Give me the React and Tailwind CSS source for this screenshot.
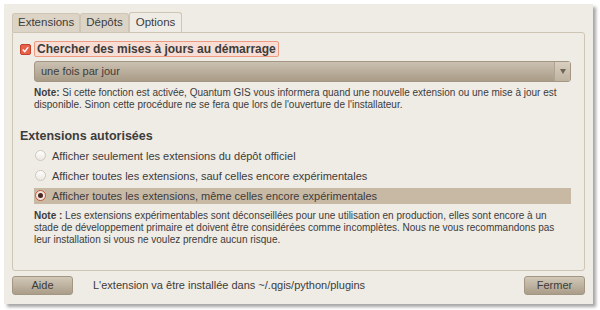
import { useState } from "react";

const font = { fontFamily: '"Liberation Sans", Arial, sans-serif' };

function Radio({ checked }) {
  return (
    <span className={"flex h-[11px] w-[11px] shrink-0 items-center justify-center rounded-full border " + (checked ? "border-[#c7573a] bg-[#f3e6e1]" : "border-[#cfc8bd] bg-gradient-to-b from-white to-[#ece8e2]")}>
      {checked && <span className="h-[5px] w-[5px] rounded-full bg-[#4a2a20]" />}
    </span>
  );
}

export default function App() {
  const [choice, setChoice] = useState(2);
  const options = [
    "Afficher seulement les extensions du dépôt officiel",
    "Afficher toutes les extensions, sauf celles encore expérimentales",
    "Afficher toutes les extensions, même celles encore expérimentales",
  ];

  return (
    <div className="h-[310px] w-[600px] bg-white pl-[4px] pt-[4px] text-[#3c3c3c]" style={font}>
      <div className="flex h-[300px] w-[589px] flex-col bg-[#efebe5] px-[8px] pt-[8px] shadow-[3px_3px_3px_rgba(0,0,0,0.35)]">
        <div className="flex items-end text-[11.5px]">
          <div className="flex h-[19px] items-center rounded-t-[3px] border border-b-0 border-[#cfc5b4] bg-[#dcd4c6] px-[5px]">Extensions</div>
          <div className="flex h-[19px] items-center rounded-t-[3px] border border-b-0 border-[#cfc5b4] bg-[#dcd4c6] px-[5px]">Dépôts</div>
          <div className="-mb-px flex h-[21px] items-center rounded-t-[3px] border border-b-0 border-[#cfc5b4] bg-[#efebe5] px-[6px]">Options</div>
        </div>
        <div className="flex h-[239px] flex-col rounded-b-[3px] rounded-tr-[3px] border border-[#cfc5b4] pl-[7px] pr-[13px] pt-[8px]">
          <label className="flex items-center gap-[3px]">
            <span className="flex h-[11px] w-[11px] items-center justify-center rounded-[2px] border border-[#c2432a] bg-[#e9604a]">
              <svg viewBox="0 0 10 10" className="h-[9px] w-[9px]"><path d="M2 5 L4.2 7.4 L8 2.4" fill="none" stroke="white" strokeWidth="1.6" /></svg>
            </span>
            <span className="rounded-[2px] border border-[#ee9a80] bg-[#f7ddd3] px-[2px] text-[12px] font-bold leading-[14px]">Chercher des mises à jours au démarrage</span>
          </label>
          <div className="ml-[14px] mt-[4px] flex h-[21px] items-stretch rounded-[3px] border border-[#a39783] bg-gradient-to-b from-[#cbc1b1] to-[#a99c88] text-[11px]">
            <span className="flex flex-1 items-center px-[6px]">une fois par jour</span>
            <span className="flex w-[16px] items-center justify-center border-l border-[#b0a592] bg-gradient-to-b from-[#d8cfc1] to-[#bfb3a0]">
              <svg viewBox="0 0 6 5" className="h-[5px] w-[6px]"><path d="M0 0 H6 L3 5 Z" fill="#6e6455" /></svg>
            </span>
          </div>
          <p className="ml-[14px] mt-[5px] text-[10px] leading-[12px]">
            <b>Note:</b> Si cette fonction est activée, Quantum GIS vous informera quand une nouvelle extension ou une mise à jour est disponible. Sinon cette procédure ne se fera que lors de l'ouverture de l'installateur.
          </p>
          <div className="mt-[16px] text-[12.5px] font-bold">Extensions autorisées</div>
          <div className="ml-[14px] mt-[2px] flex flex-col gap-[4px] text-[11px]">
            {options.map((o, i) => (
              <button key={i} onClick={() => setChoice(i)} className={"flex h-[16px] items-center gap-[6px] pl-[1px] text-left " + (choice === i ? "bg-[#c8b9a5]" : "")}>
                <Radio checked={choice === i} />
                <span>{o}</span>
              </button>
            ))}
          </div>
          <p className="ml-[14px] mt-[6px] text-[10px] leading-[12px]">
            <b>Note :</b> Les extensions expérimentables sont déconseillées pour une utilisation en production, elles sont encore à un stade de développement primaire et doivent être considérées comme incomplètes. Nous ne vous recommandons pas leur installation si vous ne voulez prendre aucun risque.
          </p>
        </div>
        <div className="mt-[5px] flex items-center text-[11px]">
          <button className="h-[19px] w-[61px] rounded-[3px] border border-[#a39783] bg-gradient-to-b from-[#d2c8b8] to-[#aa9d89]">Aide</button>
          <span className="ml-[20px] flex-1">L'extension va être installée dans ~/.qgis/python/plugins</span>
          <button className="h-[19px] w-[61px] rounded-[3px] border border-[#a39783] bg-gradient-to-b from-[#d2c8b8] to-[#aa9d89]">Fermer</button>
        </div>
      </div>
    </div>
  );
}
